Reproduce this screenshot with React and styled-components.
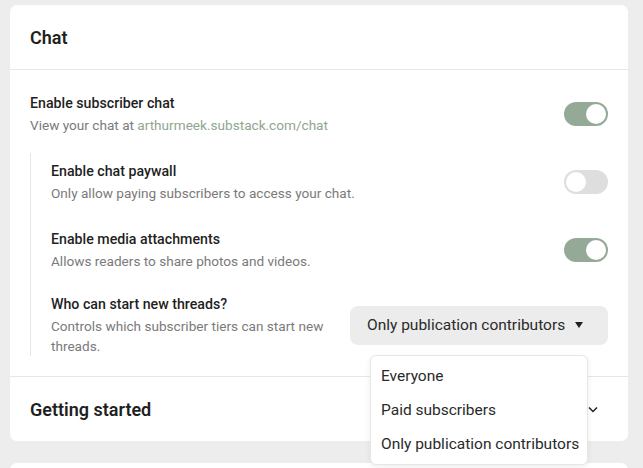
import React from 'react'
import styled, { createGlobalStyle } from 'styled-components'

const GlobalStyle = createGlobalStyle`
  body {
    margin: 0;
    background: #ededed;
    font-family: Roboto, 'Liberation Sans', sans-serif;
    color: #1f1f1f;
  }
`

const Page = styled.div`
  padding: 5px 15px 0 10px;
  display: flex;
  flex-direction: column;
  gap: 22px;
  height: 468px;
  overflow: hidden;
  box-sizing: border-box;
`

const Card = styled.div`
  background: #fff;
  border-radius: 7px;
  flex-shrink: 0;
  min-height: ${p => p.minHeight || 0}px;
`

const CardHeader = styled.div`
  height: 64px;
  padding: 0 20px;
  display: flex;
  align-items: center;
  justify-content: space-between;
  border-bottom: ${p => (p.divider ? '1px solid #e6e6e6' : 'none')};
  font-size: 18px;
  font-weight: 600;
`

const CardBody = styled.div`
  padding: 23px 20px 20px;
  border-bottom: 1px solid #e6e6e6;
`

const Row = styled.div`
  display: flex;
  align-items: center;
  justify-content: space-between;
  margin-top: ${p => p.top || 0}px;
`

const Text = styled.div`
  max-width: ${p => p.maxWidth || 460}px;
`

const Title = styled.div`
  font-size: 14.2px;
  font-weight: 500;
  line-height: 20px;
`

const Sub = styled.div`
  margin-top: 2px;
  font-size: 13.6px;
  line-height: 20px;
  color: #7a7a7a;
`

const Link = styled.span`
  color: #8fa68f;
`

const Group = styled.div`
  margin-top: 18px;
  padding: 8px 0 0 20px;
  border-left: 1px solid #e6e6e6;
`

const Track = styled.div`
  width: 44px;
  height: 24px;
  border-radius: 12px;
  background: ${p => (p.on ? '#95aa96' : '#dedede')};
  position: relative;
  flex-shrink: 0;
`

const Knob = styled.div`
  position: absolute;
  top: 2px;
  left: ${p => (p.on ? '22px' : '2px')};
  width: 20px;
  height: 20px;
  border-radius: 50%;
  background: #fff;
`

const SelectWrap = styled.div`
  position: relative;
  flex-shrink: 0;
`

const SelectBox = styled.div`
  width: 258px;
  height: 39px;
  box-sizing: border-box;
  border-radius: 8px;
  background: #ececec;
  padding: 0 25px 0 17px;
  display: flex;
  align-items: center;
  justify-content: space-between;
  font-size: 15.5px;
  color: #2a2a2a;
`

const Menu = styled.div`
  position: absolute;
  top: 49px;
  left: 20px;
  width: 218px;
  box-sizing: border-box;
  padding: 3px 0;
  background: #fff;
  border: 1px solid #e6e6e6;
  border-radius: 6px;
  box-shadow: 0 2px 6px rgba(0, 0, 0, 0.07);
  z-index: 10;
`

const MenuItem = styled.div`
  height: 34px;
  display: flex;
  align-items: center;
  padding-left: 10px;
  font-size: 15.5px;
  color: #2a2a2a;
  white-space: nowrap;
`

const Toggle = ({ on }) => (
  <Track on={on ? 1 : 0}>
    <Knob on={on ? 1 : 0} />
  </Track>
)

const options = ['Everyone', 'Paid subscribers', 'Only publication contributors']

export default function App() {
  return (
    <>
      <GlobalStyle />
      <Page>
        <Card>
          <CardHeader divider>Chat</CardHeader>
          <CardBody>
            <Row>
              <Text>
                <Title>Enable subscriber chat</Title>
                <Sub>
                  View your chat at <Link>arthurmeek.substack.com/chat</Link>
                </Sub>
              </Text>
              <Toggle on />
            </Row>
            <Group>
              <Row>
                <Text>
                  <Title>Enable chat paywall</Title>
                  <Sub>Only allow paying subscribers to access your chat.</Sub>
                </Text>
                <Toggle />
              </Row>
              <Row top={26}>
                <Text>
                  <Title>Enable media attachments</Title>
                  <Sub>Allows readers to share photos and videos.</Sub>
                </Text>
                <Toggle on />
              </Row>
              <Row top={23}>
                <Text maxWidth={285}>
                  <Title>Who can start new threads?</Title>
                  <Sub>Controls which subscriber tiers can start new threads.</Sub>
                </Text>
                <SelectWrap>
                  <SelectBox>
                    Only publication contributors
                    <svg width="8" height="6" viewBox="0 0 8 6">
                      <path d="M0 0h8L4 6z" fill="#222" />
                    </svg>
                  </SelectBox>
                  <Menu>
                    {options.map(o => (
                      <MenuItem key={o}>{o}</MenuItem>
                    ))}
                  </Menu>
                </SelectWrap>
              </Row>
            </Group>
          </CardBody>
          <CardHeader>
            Getting started
            <svg width="10" height="7" viewBox="0 0 10 7" style={{ marginRight: 10 }}>
              <path d="M1 1.5l4 4 4-4" fill="none" stroke="#222" strokeWidth="1.5" />
            </svg>
          </CardHeader>
        </Card>
        <Card minHeight={60} />
      </Page>
    </>
  )
}
